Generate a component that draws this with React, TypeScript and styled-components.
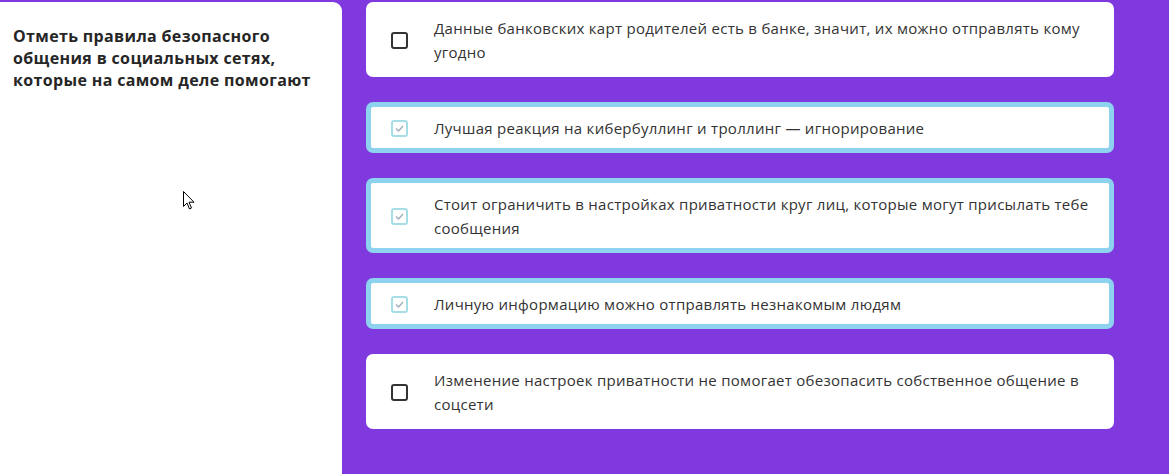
import React from "react";
import styled, { createGlobalStyle } from "styled-components";

const Global = createGlobalStyle`
  html, body { margin: 0; padding: 0; background: #8039df; }
  body { font-family: "Open Sans", "Noto Sans", sans-serif; }
  #root { min-height: 474px; }
`;

const Page = styled.div`
  display: flex;
  gap: 24px;
  height: 474px;
  padding-top: 2px;
  box-sizing: border-box;
  background: #8039df;
  overflow: hidden;
`;

const Side = styled.aside`
  position: relative;
  width: 342px;
  flex: none;
  background: #fff;
  border-top-right-radius: 9px;
  box-sizing: border-box;
  padding: 23px 12px 0 13px;
`;

const Title = styled.h2`
  margin: 0;
  font-family: "Open Sans", sans-serif;
  font-weight: 700;
  font-size: 16px;
  line-height: 22px;
  letter-spacing: 0.35px;
  color: #262626;
`;

const List = styled.div`
  display: flex;
  flex-direction: column;
  gap: 25px;
  width: 748px;
`;

const Card = styled.label<{ $checked?: boolean }>`
  display: flex;
  align-items: center;
  gap: 26px;
  background: #fff;
  border: 5px solid ${(p) => (p.$checked ? "#8dd3ef" : "#fff")};
  border-radius: 7px;
  padding: 9px 20px 8px 20px;
`;

const Box = styled.span<{ $checked?: boolean }>`
  flex: none;
  width: 17px;
  height: 17px;
  box-sizing: border-box;
  border-radius: 3px;
  border: 2px solid ${(p) => (p.$checked ? "#a6dee8" : "#333")};
  display: flex;
  align-items: center;
  justify-content: center;
`;

const Text = styled.span`
  font-size: 15px;
  line-height: 24px;
  color: #333;
  letter-spacing: 0.28px;
`;

const Cursor = styled.svg`
  position: absolute;
  left: 183px;
  top: 189px;
`;

const items = [
  { t: "Данные банковских карт родителей есть в банке, значит, их можно отправлять кому угодно", c: false },
  { t: "Лучшая реакция на кибербуллинг и троллинг — игнорирование", c: true },
  { t: "Стоит ограничить в настройках приватности круг лиц, которые могут присылать тебе сообщения", c: true },
  { t: "Личную информацию можно отправлять незнакомым людям", c: true },
  { t: "Изменение настроек приватности не помогает обезопасить собственное общение в соцсети", c: false },
];

export default function App() {
  return (
    <>
      <Global />
      <Page>
        <Side>
          <Title>
            Отметь правила безопасного общения в социальных сетях, которые на самом деле помогают
          </Title>
          <Cursor width="12" height="20" viewBox="0 0 12 20">
            <path d="M0.5 0.5 L0.5 15.5 L4 12 L6.5 18 L8.5 17 L6 11.2 L11 11.2 Z" fill="#fff" stroke="#000" strokeWidth="1" />
          </Cursor>
        </Side>
        <List>
          {items.map((it, i) => (
            <Card key={i} $checked={it.c}>
              <Box $checked={it.c}>
                {it.c && (
                  <svg width="9" height="7" viewBox="0 0 9 7">
                    <path d="M1 3.5 L3.5 6 L8 1" fill="none" stroke="#9fb0b4" strokeWidth="1.4" />
                  </svg>
                )}
              </Box>
              <Text>{it.t}</Text>
            </Card>
          ))}
        </List>
      </Page>
    </>
  );
}
